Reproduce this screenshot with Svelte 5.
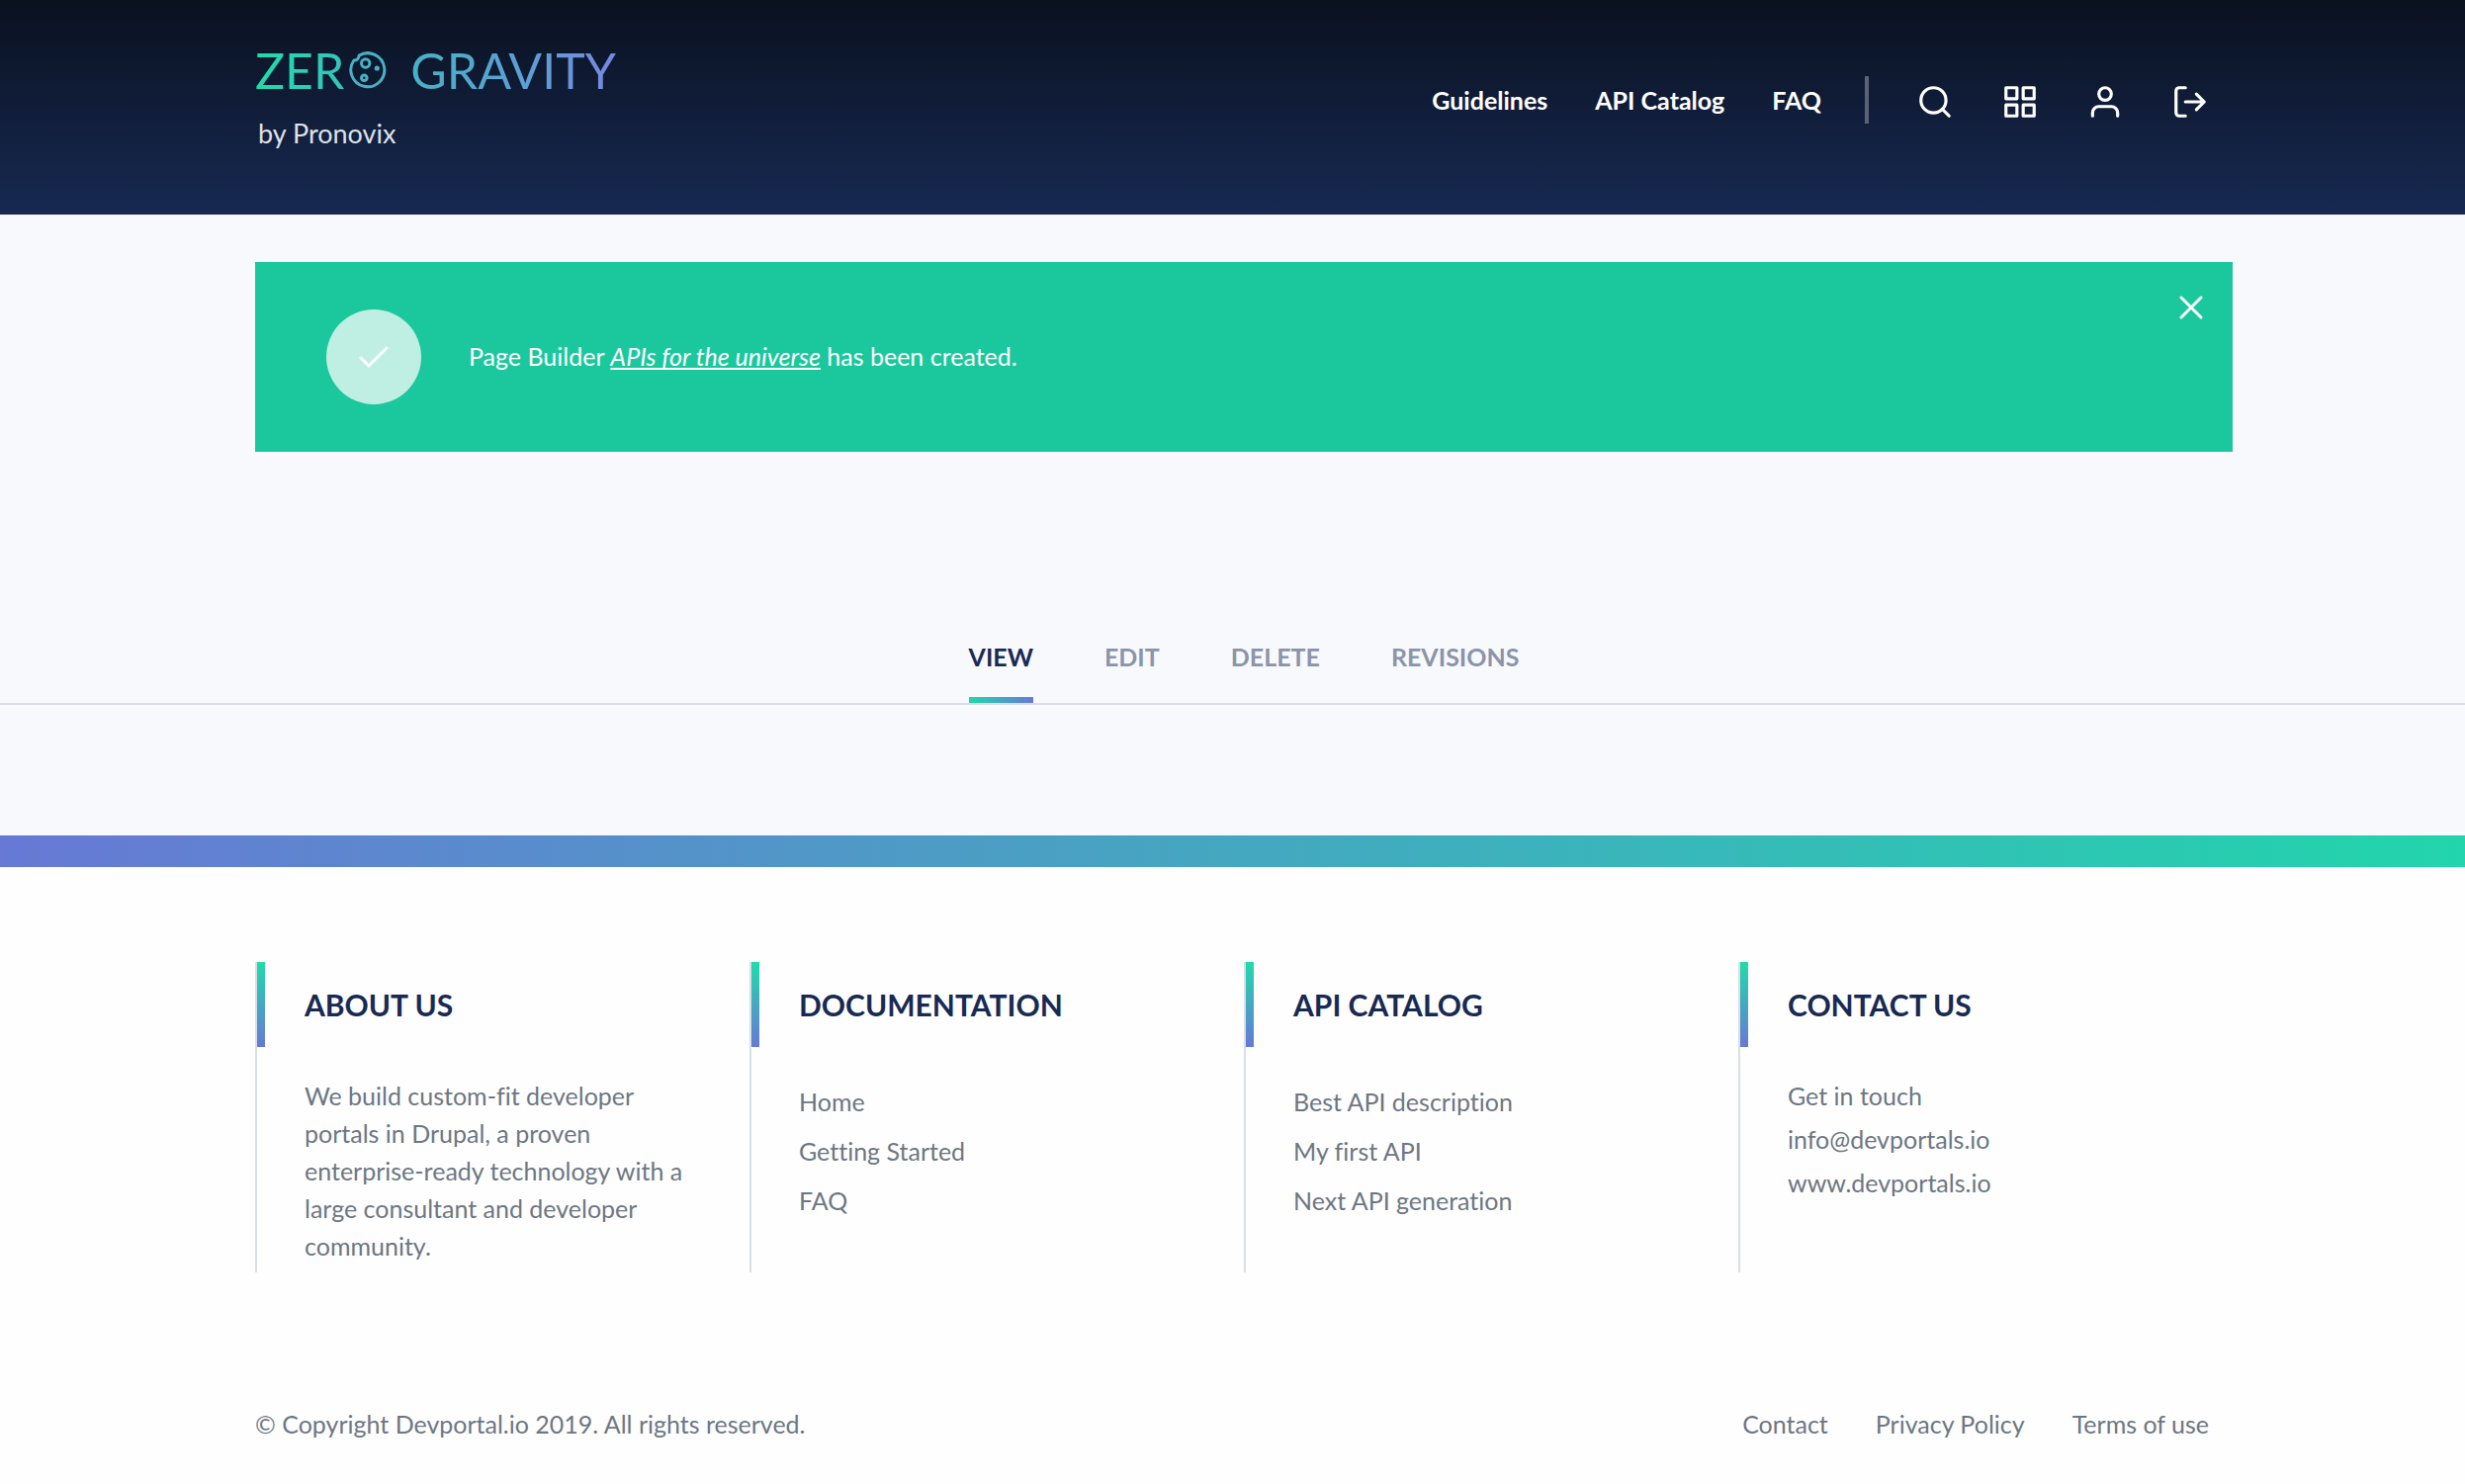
<script>
  let showMessage = $state(true);
  let activeTab = $state('View');

  const nav = ['Guidelines', 'API Catalog', 'FAQ'];
  const tabs = ['View', 'Edit', 'Delete', 'Revisions'];
  const legal = ['Contact', 'Privacy Policy', 'Terms of use'];
</script>

<div class="page">
  <header class="header">
    <div class="container header-row">
      <a class="brand" href="#home" aria-label="Zero Gravity by Pronovix">
        <span class="wordmark">
          <span>ZER</span>
          <svg class="planet" viewBox="0 0 38 38" aria-hidden="true">
            <path d="M10.200 4.100A17 17 0 1 1 4.900 9C7.800 9.400 9.800 7.400 10.200 4.100Z" />
            <circle cx="16.700" cy="12" r="4.200" />
            <circle cx="15.300" cy="26.700" r="2.800" />
            <circle class="dot" cx="28.300" cy="17" r="2.600" />
          </svg>
          <span class="second">GRAVITY</span>
        </span>
        <span class="byline">by Pronovix</span>
      </a>
      <nav class="nav" aria-label="Main">
        {#each nav as item}
          <a href="#nav">{item}</a>
        {/each}
      </nav>
      <div class="tools">
        <button aria-label="Search">
          <svg viewBox="0 0 24 24"><circle cx="11" cy="11" r="8" /><path d="M21 21l-4.350-4.350" /></svg>
        </button>
        <button aria-label="Dashboard">
          <svg viewBox="0 0 24 24"><path d="M3 3h7v7H3zM14 3h7v7h-7zM14 14h7v7h-7zM3 14h7v7H3z" /></svg>
        </button>
        <button aria-label="Account">
          <svg viewBox="0 0 24 24"><path d="M20 21v-2a4 4 0 0 0-4-4H8a4 4 0 0 0-4 4v2" /><circle cx="12" cy="7" r="4" /></svg>
        </button>
        <button aria-label="Log out">
          <svg viewBox="0 0 24 24"><path d="M9 21H5a2 2 0 0 1-2-2V5a2 2 0 0 1 2-2h4M16 17l5-5-5-5M21 12H9" /></svg>
        </button>
      </div>
    </div>
  </header>

  <main>
    {#if showMessage}
      <div class="container">
        <div class="message" role="status">
          <span class="badge">
            <svg viewBox="0 0 30 22" aria-hidden="true"><path d="M2 12l8 8L28 2" /></svg>
          </span>
          <p>Page Builder <a href="#page">APIs for the universe</a> has been created.</p>
          <button class="close" aria-label="Close" onclick={() => (showMessage = false)}>
            <svg viewBox="0 0 24 24"><path d="M2 2l20 20M22 2L2 22" /></svg>
          </button>
        </div>
      </div>
    {/if}

    <div class="tabs-line">
      <div class="container tabs">
        {#each tabs as tab}
          <button class="tab" class:active={tab === activeTab} onclick={() => (activeTab = tab)}>{tab}</button>
        {/each}
      </div>
    </div>
  </main>

  <footer class="footer">
    <div class="stripe"></div>
    <div class="container columns">
      <section>
        <h2>About us</h2>
        <p>We build custom-fit developer portals in Drupal, a proven enterprise-ready technology with a large consultant and developer community.</p>
      </section>
      <section>
        <h2>Documentation</h2>
        <ul>
          <li><a href="#docs">Home</a></li>
          <li><a href="#docs">Getting Started</a></li>
          <li><a href="#docs">FAQ</a></li>
        </ul>
      </section>
      <section>
        <h2>API Catalog</h2>
        <ul>
          <li><a href="#apis">Best API description</a></li>
          <li><a href="#apis">My first API</a></li>
          <li><a href="#apis">Next API generation</a></li>
        </ul>
      </section>
      <section>
        <h2>Contact us</h2>
        <div class="contact">
          <span>Get in touch</span>
          <a href="#mail">info@devportals.io</a>
          <a href="#site">www.devportals.io</a>
        </div>
      </section>
    </div>
    <div class="container legal">
      <span>© Copyright Devportal.io 2019. All rights reserved.</span>
      <nav aria-label="Legal">
        {#each legal as item}
          <a href="#legal">{item}</a>
        {/each}
      </nav>
    </div>
  </footer>
</div>

<style>
  :global(body) {
    background: #fefefe;
  }

  .page {
    background: #f8f9fd;
    color: #6c7784;
    font-family: Lato, 'Liberation Sans', sans-serif;
    font-size: 25px;
    font-variant-ligatures: none;
    line-height: 38px;
  }

  .page * {
    box-sizing: border-box;
  }

  a {
    color: inherit;
    text-decoration: none;
  }

  button {
    margin: 0;
    padding: 0;
    border: 0;
    background: none;
    color: inherit;
    font: inherit;
    cursor: pointer;
  }

  svg {
    display: block;
    fill: none;
    stroke: currentColor;
    stroke-linecap: round;
    stroke-linejoin: round;
  }

  .container {
    padding: 0 235px 0 258px;
  }

  .header {
    background: linear-gradient(#0a111f, #172952);
    color: #fff;
  }

  .header-row {
    display: flex;
    align-items: flex-start;
    padding-bottom: 61px;
  }

  .brand {
    display: flex;
    flex-direction: column;
    padding-top: 41px;
    margin-right: auto;
  }

  .wordmark {
    display: flex;
    align-items: center;
    background: linear-gradient(90deg, #1fdcab, #45b3c4 40%, #5c9fd4 75%, #7688e0);
    background-clip: text;
    -webkit-background-clip: text;
    color: transparent;
    font-size: 50px;
    line-height: 60px;
  }

  .planet {
    width: 38px;
    height: 38px;
    margin-left: 5px;
    color: #48b1c5;
    stroke-width: 3;
  }

  .dot {
    fill: currentColor;
    stroke: none;
  }

  .second {
    margin-left: 24px;
  }

  .byline {
    padding: 12px 0 0 3px;
    color: #dfe1e6;
    font-size: 27px;
    line-height: 43px;
  }

  .nav {
    display: flex;
    gap: 48px;
    margin-top: 77px;
    padding-right: 44px;
    border-right: 4px solid #5b6276;
    font-weight: 700;
    line-height: 48px;
  }

  .tools {
    display: flex;
    gap: 48px;
    padding: 84px 24px 0 48px;
  }

  .tools svg {
    width: 38px;
    height: 38px;
    stroke-width: 2;
  }

  .message {
    position: relative;
    display: flex;
    align-items: center;
    gap: 48px;
    margin-top: 48px;
    padding: 48px 72px;
    background: #1bc89d;
    color: #fff;
  }

  .message p {
    margin: 0;
    padding-bottom: 2px;
  }

  .message a {
    font-style: italic;
    text-decoration: underline;
    text-decoration-thickness: 2px;
    text-underline-offset: 2px;
    text-decoration-skip-ink: none;
  }

  .badge {
    display: grid;
    place-items: center;
    width: 96px;
    height: 96px;
    border-radius: 50%;
    background: #bfeee2;
  }

  .badge svg {
    width: 30px;
    height: 22px;
    stroke-width: 3;
  }

  .close {
    position: absolute;
    top: 34px;
    right: 30px;
  }

  .close svg {
    width: 24px;
    height: 24px;
    stroke-width: 3;
  }

  .tabs-line {
    margin: 188px 0 132px;
    border-bottom: 2px solid #dadde5;
  }

  .tabs {
    display: flex;
    justify-content: center;
    gap: 72px;
  }

  .tab {
    padding-bottom: 22px;
    border-bottom: 6px solid transparent;
    color: #8a94aa;
    font-weight: 700;
    text-transform: uppercase;
  }

  .tab.active {
    border-image: linear-gradient(90deg, #1fd9ac, #6877d6) 1;
    color: #182a54;
  }

  .footer {
    background: #fefefe;
  }

  .stripe {
    height: 32px;
    background: linear-gradient(90deg, #6779d5, #22d5ac);
  }

  .columns {
    display: grid;
    grid-template-columns: repeat(4, 1fr);
    padding-top: 96px;
  }

  section {
    padding: 0 60px 8px 0;
    border-left: 2px solid #d9dde5;
  }

  h2 {
    margin: 0 0 30px;
    padding-left: 40px;
    border-left: 8px solid;
    border-image: linear-gradient(#1fdcab, #6877d6) 1;
    color: #182a54;
    font-size: 30px;
    font-weight: 700;
    line-height: 86px;
    text-transform: uppercase;
  }

  section p,
  section ul,
  .contact {
    margin: 0;
    padding: 0 0 0 48px;
  }

  section ul {
    list-style: none;
  }

  section li {
    padding: 6px 0;
  }

  .contact {
    display: flex;
    flex-direction: column;
    align-items: flex-start;
    gap: 6px;
  }

  .legal {
    display: flex;
    justify-content: space-between;
    padding-top: 134px;
    padding-bottom: 42px;
  }

  .legal nav {
    display: flex;
    gap: 48px;
    padding-right: 24px;
  }
</style>
